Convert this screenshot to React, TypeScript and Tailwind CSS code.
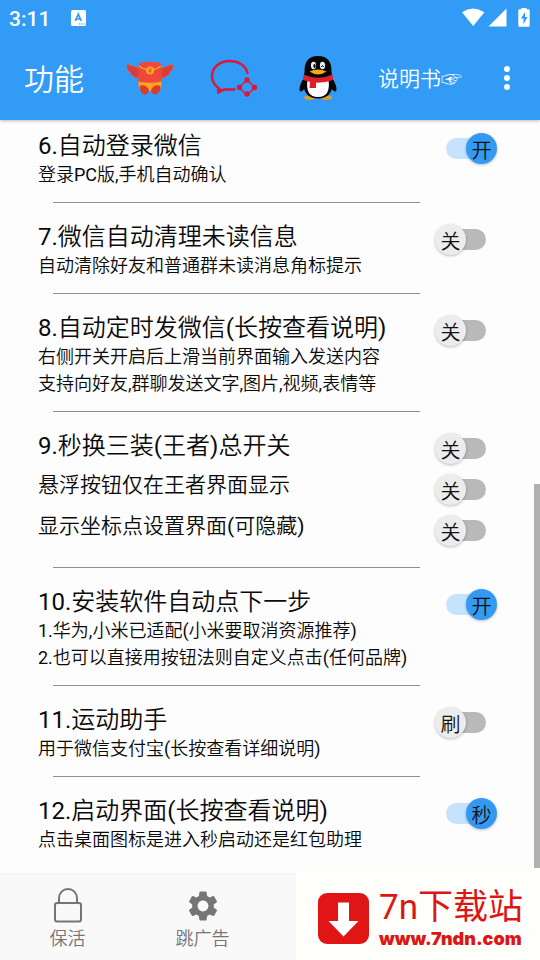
import React from "react";

type Toggle = { label: string; state: string; on: boolean };
type Feature = { title: Toggle; notes?: string[]; options?: Toggle[] };

const off = (label: string, state = "关"): Toggle => ({ label, state, on: false });
const on = (label: string, state = "开"): Toggle => ({ label, state, on: true });

const features: Feature[] = [
  { title: on("6.自动登录微信"), notes: ["登录PC版,手机自动确认"] },
  { title: off("7.微信自动清理未读信息"), notes: ["自动清除好友和普通群未读消息角标提示"] },
  {
    title: off("8.自动定时发微信(长按查看说明)"),
    notes: ["右侧开关开启后上滑当前界面输入发送内容", "支持向好友,群聊发送文字,图片,视频,表情等"],
  },
  {
    title: off("9.秒换三装(王者)总开关"),
    options: [off("悬浮按钮仅在王者界面显示"), off("显示坐标点设置界面(可隐藏)")],
  },
  {
    title: on("10.安装软件自动点下一步"),
    notes: ["1.华为,小米已适配(小米要取消资源推荐)", "2.也可以直接用按钮法则自定义点击(任何品牌)"],
  },
  { title: off("11.运动助手", "刷"), notes: ["用于微信支付宝(长按查看详细说明)"] },
  { title: on("12.启动界面(长按查看说明)", "秒"), notes: ["点击桌面图标是进入秒启动还是红包助理"] },
];

function Switch({ id, toggle }: { id: string; toggle: Toggle }) {
  return (
    <label htmlFor={id} className="relative flex h-[31px] w-[62px] cursor-pointer items-center">
      <input id={id} type="checkbox" role="switch" defaultChecked={toggle.on} className="peer sr-only" />
      <span className="mx-[11px] h-[21px] flex-1 rounded-full bg-[#b9b9b9] peer-checked:bg-[#c5e3fd]" />
      <span className="absolute left-0 top-0 flex size-[31px] items-center justify-center rounded-full bg-[#ececec] pt-1 text-xl leading-5 text-[#111] shadow-[0_1px_3px_rgba(0,0,0,0.25)] peer-checked:left-auto peer-checked:right-0 peer-checked:bg-[#3399f3]">
        {toggle.state}
      </span>
    </label>
  );
}

function FeatureRow({ feature, index }: { feature: Feature; index: number }) {
  const id = `feature-${index}`;
  const options = feature.options ?? [];
  return (
    <section className={`flex items-start pl-[38px] pr-[43px] ${index === 0 ? "pt-[11px]" : "pt-[19px]"} ${options.length ? "pb-5" : "pb-[14px]"}`}>
      <div className="min-w-0 flex-1 whitespace-nowrap">
        <h2 className="text-2xl leading-[30px]">
          <label htmlFor={id}>{feature.title.label}</label>
        </h2>
        {feature.notes?.map((note) => (
          <p key={note} className="text-lg leading-[27px]">{note}</p>
        ))}
        {options.length > 0 && (
          <div className="pt-1">
            {options.map((option, i) => (
              <label key={option.label} htmlFor={`${id}-${i}`} className="block text-[21px] leading-[41px]">
                {option.label}
              </label>
            ))}
          </div>
        )}
      </div>
      <div className="flex shrink-0 flex-col gap-[10px] pt-[2px]">
        <Switch id={id} toggle={feature.title} />
        {options.map((option, i) => (
          <Switch key={option.label} id={`${id}-${i}`} toggle={option} />
        ))}
      </div>
    </section>
  );
}

function StatusBar() {
  return (
    <div className="flex h-9 items-center pl-[9px] pr-[10px]">
      <span className="pt-[2px] font-[Roboto] text-[21px] font-medium leading-6">3:11</span>
      <svg viewBox="0 0 15 16" className="ml-[21px] h-4 w-[15px]" aria-hidden="true">
        <rect width="15" height="16" rx="1.5" fill="#fff" />
        <path d="M4.3 11 7.3 4.2 10.3 11M5.3 9h4" fill="none" stroke="#319bf5" strokeWidth="1.7" />
        <path d="M8 14h1.2M10.3 14h1.2M12.6 14h1.2" stroke="#319bf5" strokeWidth="1.2" />
      </svg>
      <svg viewBox="0 0 68 20" className="ml-auto h-5 w-[68px]" fill="#fff" aria-hidden="true">
        <path d="M0 4.2Q11 -3 22.4 4.2L11.2 18Z" />
        <path d="M44.5 0.5V18.5H26.5Z" />
        <path fillRule="evenodd" d="M59.5 -.5h5v1.800h2q1.2 0 1.2 1.2v15q0 1.200-1.200 1.200h-9q-1.200 0-1.200-1.200V2.500q0-1.200 1.200-1.200h2ZM63 4l-4 6.500h2.500V16l4-7h-2.500Z" />
      </svg>
    </div>
  );
}

function RedPacketIcon() {
  return (
    <svg viewBox="0 0 48 34" className="h-[34px] w-12" aria-hidden="true">
      <g fill="#e23a35" stroke="#c97a5b" strokeWidth=".5">
        <path d="M13 16.500C10.500 17.500 8 17 7.500 15 5.500 14.500 4.300 13 4.500 11.500 2.500 10.500 1.200 9 1.500 7.500 .6 6 .6 4.500 1.500 3 6 5.500 10 4.500 13 8.500Z" />
        <path d="M35 16.500C37.500 17.500 40 17 40.500 15 42.500 14.500 43.700 13 43.500 11.500 45.500 10.500 46.800 9 46.500 7.500 47.400 6 47.400 4.500 46.500 3 42 5.500 38 4.500 35 8.500Z" />
      </g>
      <path d="M2 7.500l7 2.500M5 11.500l5 1.500M46 7.500l-7 2.500M43 11.500l-5 1.500" stroke="#a8485c" strokeWidth=".7" />
      <path d="M15 1.500Q24 0 33 1.500 35.500 2 35.500 4.500V24Q35.500 29 31 30H17Q12.500 29 12.500 24V4.500Q12.500 2 15 1.500Z" fill="#ee473b" />
      <path d="M12.500 20.500Q24 23 35.500 20.500V24Q35.500 29 31 30H17Q12.500 29 12.500 24Z" fill="#fba51d" />
      <path d="M13.500 25Q19 22.500 23 28.500 22.500 33.500 18.500 33.500T13.500 25ZM34.500 25Q29 22.500 25 28.500 25.500 33.500 29.500 33.500T34.500 25Z" fill="#dc3a31" />
      <path d="M13 5Q24 13 35 5" fill="none" stroke="#f7ad2e" strokeWidth="1.200" />
      <circle cx="24" cy="9.500" r="4" fill="#f7a927" />
      <path d="m22.300 7 1.700 2.300L25.700 7M24 9.300v3M22.300 10h3.400" fill="none" stroke="#d64725" strokeWidth=".8" />
    </svg>
  );
}

function ChatNetworkIcon() {
  return (
    <svg viewBox="0 0 48 38" className="h-[38px] w-12" fill="none" aria-hidden="true">
      <g stroke="#dc1739" strokeLinecap="round">
        <path d="M37.500 14C35.500 6 28 2 19.500 2 10 2 2 8.500 2 17c0 6 3 9.500 6.500 12L8.500 33l6-2.500H24.500" strokeWidth="2.500" />
        <path d="m37 21 8 7.500-8 7.500-8-7.500Z" strokeWidth="1.300" />
      </g>
      <path d="m7 28 .5 7 7-4Z" fill="#dc1739" />
      <g fill="#dc1739">
        <circle cx="37" cy="21" r="2.700" />
        <circle cx="44.500" cy="28.500" r="2.700" />
        <circle cx="37" cy="35" r="2.700" />
        <circle cx="29.500" cy="28.500" r="2.700" />
      </g>
    </svg>
  );
}

function PenguinIcon() {
  return (
    <svg viewBox="0 0 38 44" className="h-11 w-[38px]" aria-hidden="true">
      <ellipse cx="11" cy="41.500" rx="6" ry="2.300" fill="#d9a02c" />
      <ellipse cx="27" cy="41.500" rx="6" ry="2.300" fill="#d9a02c" />
      <path d="M5.500 21Q0 29 .5 34 1.500 38 6 32ZM32.500 21Q38 29 37.500 34 36.500 38 32 32Z" fill="#050506" />
      <path d="M5.500 16Q5 0 19 0T32.500 16L34 27Q33 42.500 19 42.500T4 27Z" fill="#050506" />
      <path d="M8.500 24Q19 28 29.500 24 32 41 19 41T8.500 24Z" fill="#fff" />
      <ellipse cx="14.500" cy="9.500" rx="2.600" ry="3.700" fill="#eee" />
      <ellipse cx="23.500" cy="9.500" rx="2.600" ry="3.700" fill="#eee" />
      <ellipse cx="15.500" cy="10" rx="1.200" ry="2" fill="#000" />
      <path d="M22.300 11q1.200-3 2.400 0" fill="none" stroke="#000" strokeWidth="1" />
      <path d="M10.500 15.500Q19 11.500 27.500 15.500 19 21.500 10.500 15.500Z" fill="#f5a81c" />
      <path d="M4.500 18.500Q19 25 33.500 18.500L34 24Q19 29.500 4 24Z" fill="#e01e2b" />
      <path d="M11 25.500h6v6.500h-6.500Z" fill="#e01e2b" />
    </svg>
  );
}

function Header() {
  return (
    <header className="relative z-10 bg-[#319bf5] text-white shadow-[0_1px_3px_rgba(0,0,0,0.25)]">
      <StatusBar />
      <div className="flex h-[84px] items-center">
        <h1 className="w-[108px] shrink-0 pl-6 pt-[2px] text-[30px]">功能</h1>
        <button aria-label="红包" className="flex w-[84px] shrink-0 justify-center"><RedPacketIcon /></button>
        <button aria-label="群聊" className="flex w-[84px] shrink-0 justify-center"><ChatNetworkIcon /></button>
        <button aria-label="QQ" className="flex w-[84px] shrink-0 justify-center"><PenguinIcon /></button>
        <a href="#manual" className="w-[120px] shrink-0 whitespace-nowrap pt-1 text-center text-[21px]">说明书☞</a>
        <button aria-label="更多" className="ml-auto flex w-[60px] justify-center pr-[6px]">
          <svg viewBox="0 0 6 24" className="h-6 w-[6px]" fill="#fff" aria-hidden="true">
            <circle cx="3" cy="3" r="3" />
            <circle cx="3" cy="12" r="3" />
            <circle cx="3" cy="21" r="3" />
          </svg>
        </button>
      </div>
    </header>
  );
}

function BottomNav() {
  return (
    <nav className="grid h-[86px] grid-cols-4 bg-[#f9f9f9] text-lg leading-6 text-[#757575] shadow-[0_-1px_1px_rgba(0,0,0,0.03)]">
      <button className="flex flex-col items-center pt-[14px]">
        <svg viewBox="0 0 28 36" className="h-9 w-7" fill="none" stroke="#757575" strokeWidth="2" aria-hidden="true">
          <rect x="1" y="15" width="26" height="18.500" rx="2" />
          <path d="M5 15V10a9 9 0 0 1 18 0V15" />
        </svg>
        <span className="pt-[3px]">保活</span>
      </button>
      <button className="flex flex-col items-center pt-[14px]">
        <svg viewBox="2 2 20 20" className="my-[3px] h-[30px] w-[30px]" fill="#757575" aria-hidden="true">
          <path d="M19.140 12.940c.04-.3.06-.61.06-.94 0-.32-.02-.64-.07-.94l2.030-1.580c.18-.14.23-.41.12-.61l-1.920-3.320c-.12-.22-.37-.29-.59-.22l-2.390.96c-.5-.38-1.030-.7-1.620-.94l-.36-2.540c-.04-.24-.24-.41-.48-.41h-3.840c-.24 0-.43.17-.47.41l-.36 2.540c-.59.24-1.130.57-1.620.94l-2.390-.96c-.22-.08-.47 0-.59.22L2.740 8.870c-.12.21-.08.47.12.61l2.030 1.580c-.05.3-.09.63-.09.94s.02.64.07.94l-2.030 1.580c-.18.14-.23.41-.12.61l1.920 3.320c.12.22.37.29.59.22l2.390-.96c.5.38 1.030.7 1.620.94l.36 2.540c.05.24.24.41.48.41h3.840c.24 0 .44-.17.47-.41l.36-2.540c.59-.24 1.130-.56 1.620-.94l2.390.96c.22.08.47 0 .59-.22l1.920-3.320c.12-.22.07-.47-.12-.61l-2.010-1.580zM12 15.600c-1.980 0-3.600-1.620-3.600-3.600s1.620-3.600 3.600-3.600 3.600 1.620 3.600 3.600-1.620 3.600-3.600 3.600z" />
        </svg>
        <span className="pt-[3px]">跳广告</span>
      </button>
    </nav>
  );
}

function SiteBadge() {
  return (
    <div className="absolute bottom-0 right-0 flex h-[92px] w-[244px] items-center bg-[#fefefb] pl-[22px] pt-2">
      <svg viewBox="0 0 51 51" className="size-[51px] shrink-0" aria-hidden="true">
        <rect width="51" height="51" rx="9" fill="#e01515" />
        <path d="M20 9.500h11V28h9.500L25.500 43.500 10.500 28H20Z" fill="#fff" />
      </svg>
      <div className="whitespace-nowrap pl-[10px] text-[#dc1515]">
        <p className="pt-1 font-[Roboto,'Noto_Sans_CJK_SC',sans-serif] text-[35px] leading-[38px]">7n下载站</p>
        <p className="font-[Inter] text-lg font-black leading-6">www.7ndn.com</p>
      </div>
    </div>
  );
}

export default function App() {
  return (
    <div className="relative flex min-h-screen flex-col bg-[#fdfdfd] font-[Roboto,'Noto_Sans_CJK_SC_DemiLight','Noto_Sans_CJK_SC',sans-serif] font-normal text-[#0a0a0a]">
      <Header />
      <main className="relative flex-1">
        {features.map((feature, index) => (
          <React.Fragment key={feature.title.label}>
            {index > 0 && <hr className="ml-[53px] mr-[120px] border-[#8f8f8f]" />}
            <FeatureRow feature={feature} index={index} />
          </React.Fragment>
        ))}
        <div className="absolute bottom-[5px] right-0 h-[385px] w-[6px] bg-[#b0b0b0]" />
      </main>
      <BottomNav />
      <SiteBadge />
    </div>
  );
}
